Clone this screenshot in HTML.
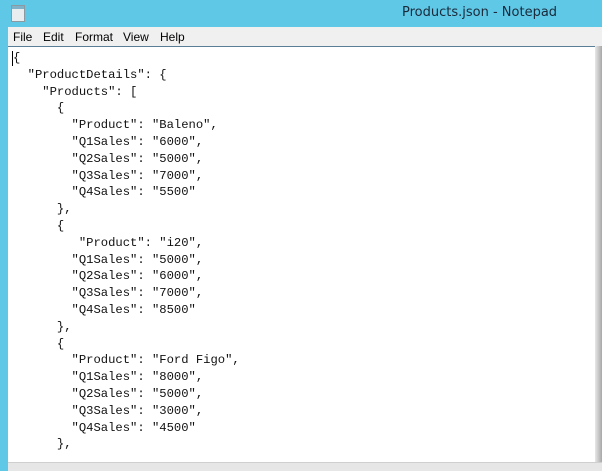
<!DOCTYPE html>
<html><head><meta charset="utf-8"><style>
body{margin:0;width:602px;height:470px;overflow:hidden;background:#5ec8e6;position:relative;font-family:"Liberation Sans",sans-serif}
.title{position:absolute;left:0;top:0;width:602px;height:27px;background:#5fc8e7}
.title span{position:absolute;left:402px;top:5px;font-size:14px;color:#1a2a3a;font-family:"DejaVu Sans","Liberation Sans",sans-serif;font-size:13px}
.icon{position:absolute;left:11px;top:5px;width:12px;height:15px;background:#e8eef0;border:1px solid #8a9aa0}
.icon:before{content:"";position:absolute;left:0;top:0;width:12px;height:3px;background:#7fb2c8}
.menu{position:absolute;left:8px;top:27px;width:594px;height:19px;background:#f0f0f0;font-size:12px;color:#000}
.menu span{position:absolute;top:3px}
.edit{position:absolute;left:8px;top:46px;width:587px;height:416px;background:#fff;border-top:1px solid #5a7e96}
.right{position:absolute;left:595px;top:46px;width:7px;height:424px;background:linear-gradient(90deg,#e8e8e8,#a8a8a8)}
.bottom{position:absolute;left:8px;top:462px;width:594px;height:8px;background:#e6e6e6;border-top:1px solid #cfcfcf}
pre{margin:0;position:absolute;left:5px;top:3px;font-family:"Liberation Mono",monospace;font-size:12.2px;line-height:16.8px;color:#111}
.caret{position:absolute;left:12px;top:51px;width:1px;height:15px;background:#000}
</style></head><body>
<div class="title"><div class="icon"></div><span>Products.json - Notepad</span></div>
<div class="menu"><span style="left:5px">File</span><span style="left:35px">Edit</span><span style="left:67px">Format</span><span style="left:115px">View</span><span style="left:152px">Help</span></div>
<div class="edit"><pre>{
  "ProductDetails": {
    "Products": [
      {
        "Product": "Baleno",
        "Q1Sales": "6000",
        "Q2Sales": "5000",
        "Q3Sales": "7000",
        "Q4Sales": "5500"
      },
      {
         "Product": "i20",
        "Q1Sales": "5000",
        "Q2Sales": "6000",
        "Q3Sales": "7000",
        "Q4Sales": "8500"
      },
      {
        "Product": "Ford Figo",
        "Q1Sales": "8000",
        "Q2Sales": "5000",
        "Q3Sales": "3000",
        "Q4Sales": "4500"
      },</pre></div>
<div class="caret"></div>
<div class="right"></div>
<div class="bottom"></div>
</body></html>
